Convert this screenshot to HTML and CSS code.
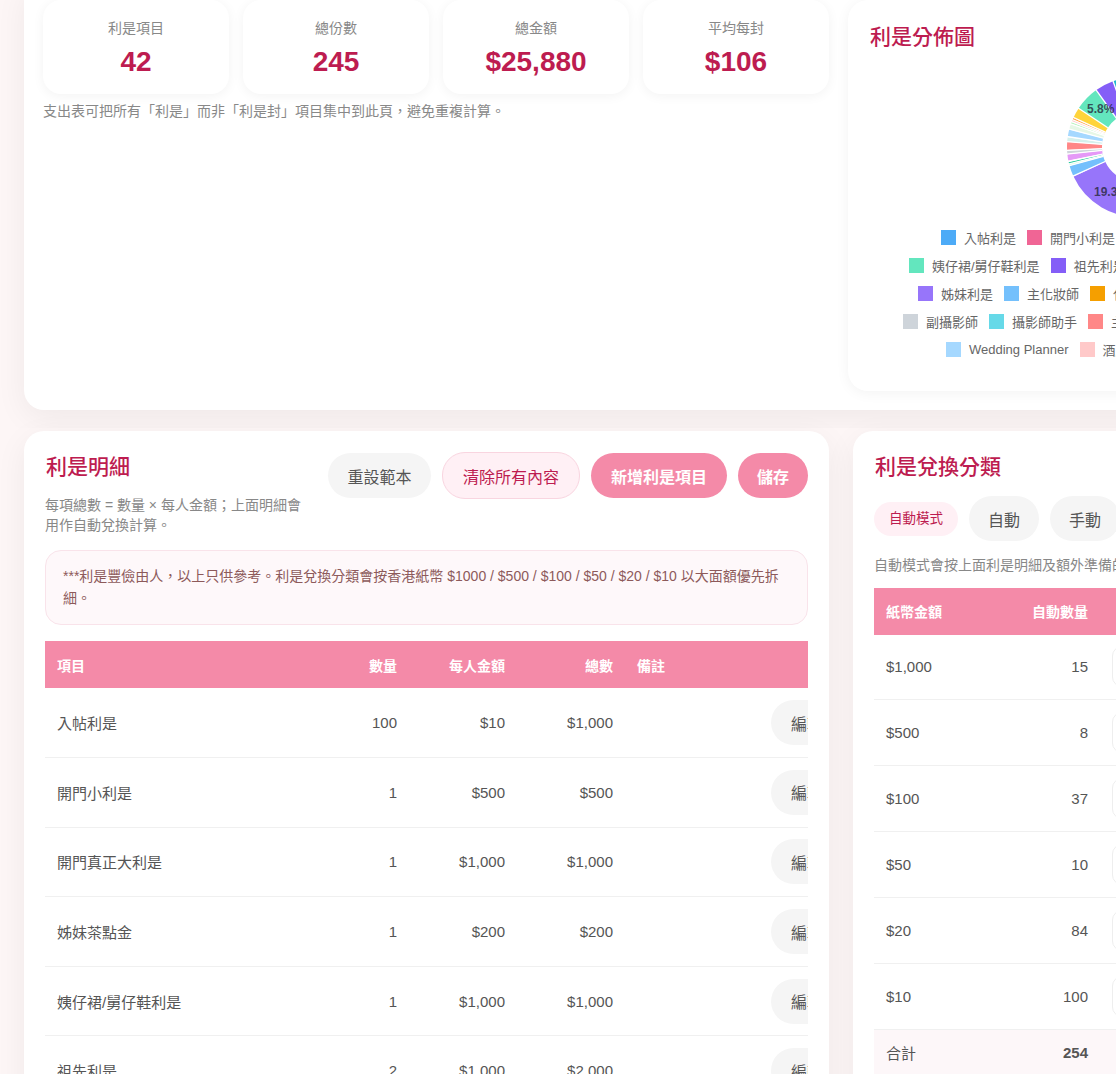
FILE: index.html
```html
<!DOCTYPE html>
<html lang="zh-Hant">
<head>
<meta charset="utf-8">
<title>利是</title>
<link rel="stylesheet" href="styles.css">
</head>
<body>
<div class="page">
  <section class="upper">
    <div class="panel top-panel">
      <div class="summary">
        <div class="stats">
          <div class="stat"><div class="stat-label">利是項目</div><div class="stat-value">42</div></div>
          <div class="stat"><div class="stat-label">總份數</div><div class="stat-value">245</div></div>
          <div class="stat"><div class="stat-label">總金額</div><div class="stat-value">$25,880</div></div>
          <div class="stat"><div class="stat-label">平均每封</div><div class="stat-value">$106</div></div>
        </div>
        <p class="summary-note">支出表可把所有「利是」而非「利是封」項目集中到此頁，避免重複計算。</p>
      </div>
      <div class="chart-card">
        <h2 class="title">利是分佈圖</h2>
        <svg class="donut" viewBox="0 0 150 150" width="150" height="150">
          <g fill="none" stroke-width="35">
            <circle cx="75" cy="75" r="52.5" pathLength="360" stroke="#4dabf7" stroke-dasharray="60 360" transform="rotate(-90 75 75)"/>
            <circle cx="75" cy="75" r="52.5" pathLength="360" stroke="#f06595" stroke-dasharray="60 360" transform="rotate(-30 75 75)"/>
            <circle cx="75" cy="75" r="52.5" pathLength="360" stroke="#ffa94d" stroke-dasharray="55.5 360" transform="rotate(30 75 75)"/>
            <circle cx="75" cy="75" r="52.5" pathLength="360" stroke="#9775fa" stroke-dasharray="69.5 360" transform="rotate(85.5 75 75)"/>
            <circle cx="75" cy="75" r="52.5" pathLength="360" stroke="#74c0fc" stroke-dasharray="9 360" transform="rotate(155.5 75 75)"/>
            <circle cx="75" cy="75" r="52.5" pathLength="360" stroke="#d3f9d8" stroke-dasharray="1.5 360" transform="rotate(164.5 75 75)"/>
            <circle cx="75" cy="75" r="52.5" pathLength="360" stroke="#20c997" stroke-dasharray="1.5 360" transform="rotate(166 75 75)"/>
            <circle cx="75" cy="75" r="52.5" pathLength="360" stroke="#e599f7" stroke-dasharray="5.5 360" transform="rotate(168.7 75 75)"/>
            <circle cx="75" cy="75" r="52.5" pathLength="360" stroke="#ced4da" stroke-dasharray="2.6 360" transform="rotate(174.3 75 75)"/>
            <circle cx="75" cy="75" r="52.5" pathLength="360" stroke="#ff8787" stroke-dasharray="6.8 360" transform="rotate(177.5 75 75)"/>
            <circle cx="75" cy="75" r="52.5" pathLength="360" stroke="#d5f0ec" stroke-dasharray="3.5 360" transform="rotate(184.5 75 75)"/>
            <circle cx="75" cy="75" r="52.5" pathLength="360" stroke="#a5d8ff" stroke-dasharray="6.1 360" transform="rotate(188.5 75 75)"/>
            <circle cx="75" cy="75" r="52.5" pathLength="360" stroke="#e6f7e6" stroke-dasharray="4 360" transform="rotate(195 75 75)"/>
            <circle cx="75" cy="75" r="52.5" pathLength="360" stroke="#b2f2bb" stroke-dasharray="1.6 360" transform="rotate(199.4 75 75)"/>
            <circle cx="75" cy="75" r="52.5" pathLength="360" stroke="#ffc9c9" stroke-dasharray="1.4 360" transform="rotate(201.3 75 75)"/>
            <circle cx="75" cy="75" r="52.5" pathLength="360" stroke="#ffa94d" stroke-dasharray="1.6 360" transform="rotate(203 75 75)"/>
            <circle cx="75" cy="75" r="52.5" pathLength="360" stroke="#ffd43b" stroke-dasharray="8.5 360" transform="rotate(205 75 75)"/>
            <circle cx="75" cy="75" r="52.5" pathLength="360" stroke="#63e6be" stroke-dasharray="20.9 360" transform="rotate(213.5 75 75)"/>
            <circle cx="75" cy="75" r="52.5" pathLength="360" stroke="#845ef7" stroke-dasharray="15.6 360" transform="rotate(234.4 75 75)"/>
            <circle cx="75" cy="75" r="52.5" pathLength="360" stroke="#22b8cf" stroke-dasharray="20 360" transform="rotate(250 75 75)"/>
          </g>
          <g class="donut-gaps" stroke="#fff" stroke-width="1.3">
            <line x1="75" y1="4" x2="75" y2="40" transform="rotate(175.5 75 75)"/>
            <line x1="75" y1="4" x2="75" y2="40" transform="rotate(245.5 75 75)"/>
            <line x1="75" y1="4" x2="75" y2="40" transform="rotate(254.5 75 75)"/>
            <line x1="75" y1="4" x2="75" y2="40" transform="rotate(256 75 75)"/>
            <line x1="75" y1="4" x2="75" y2="40" transform="rotate(258.4 75 75)"/>
            <line x1="75" y1="4" x2="75" y2="40" transform="rotate(264.3 75 75)"/>
            <line x1="75" y1="4" x2="75" y2="40" transform="rotate(267.3 75 75)"/>
            <line x1="75" y1="4" x2="75" y2="40" transform="rotate(274.4 75 75)"/>
            <line x1="75" y1="4" x2="75" y2="40" transform="rotate(278.5 75 75)"/>
            <line x1="75" y1="4" x2="75" y2="40" transform="rotate(284.7 75 75)"/>
            <line x1="75" y1="4" x2="75" y2="40" transform="rotate(289.3 75 75)"/>
            <line x1="75" y1="4" x2="75" y2="40" transform="rotate(291.2 75 75)"/>
            <line x1="75" y1="4" x2="75" y2="40" transform="rotate(293 75 75)"/>
            <line x1="75" y1="4" x2="75" y2="40" transform="rotate(295 75 75)"/>
            <line x1="75" y1="4" x2="75" y2="40" transform="rotate(303.5 75 75)"/>
            <line x1="75" y1="4" x2="75" y2="40" transform="rotate(324.4 75 75)"/>
            <line x1="75" y1="4" x2="75" y2="40" transform="rotate(340 75 75)"/>
          </g>
          <text class="slice-label" x="25" y="41">5.8%</text>
          <text class="slice-label" x="32" y="124">19.3%</text>
        </svg>
        <div class="legend">
          <div class="legend-row row-a">
            <span class="legend-item"><i class="sw c-blue"></i>入帖利是</span>
            <span class="legend-item"><i class="sw c-pink"></i>開門小利是</span>
            <span class="legend-item"><i class="sw c-gold"></i>開門真正大利是</span>
          </div>
          <div class="legend-row row-b">
            <span class="legend-item"><i class="sw c-mint"></i>姨仔裙/舅仔鞋利是</span>
            <span class="legend-item"><i class="sw c-violet"></i>祖先利是</span>
            <span class="legend-item"><i class="sw c-teal"></i>兄弟利是</span>
          </div>
          <div class="legend-row row-c">
            <span class="legend-item"><i class="sw c-purple"></i>姊妹利是</span>
            <span class="legend-item"><i class="sw c-sky"></i>主化妝師</span>
            <span class="legend-item"><i class="sw c-orange"></i>化妝師助手</span>
          </div>
          <div class="legend-row row-d">
            <span class="legend-item"><i class="sw c-grey"></i>副攝影師</span>
            <span class="legend-item"><i class="sw c-cyan"></i>攝影師助手</span>
            <span class="legend-item"><i class="sw c-red"></i>主持人</span>
          </div>
          <div class="legend-row row-e">
            <span class="legend-item"><i class="sw c-pale"></i>Wedding Planner</span>
            <span class="legend-item"><i class="sw c-rose"></i>酒店員工</span>
          </div>
        </div>
      </div>
    </div>
  </section>

  <section class="lower">
    <div class="panel detail-panel">
      <div class="detail-head">
        <div class="detail-intro">
          <h2 class="title">利是明細</h2>
          <p class="hint">每項總數 = 數量 × 每人金額；上面明細會用作自動兌換計算。</p>
        </div>
        <div class="actions">
          <button class="btn">重設範本</button>
          <button class="btn btn-soft btn-wide">清除所有內容</button>
          <button class="btn btn-main btn-wide">新增利是項目</button>
          <button class="btn btn-main btn-save">儲存</button>
        </div>
      </div>
      <div class="notice">***利是豐儉由人，以上只供參考。利是兌換分類會按香港紙幣 $1000 / $500 / $100 / $50 / $20 / $10 以大面額優先拆細。</div>
      <div class="table-wrap">
        <table class="table detail-table">
          <thead>
            <tr><th class="col-item">項目</th><th class="num col-qty">數量</th><th class="num col-amt">每人金額</th><th class="num col-amt">總數</th><th class="col-note">備註</th><th class="col-act"></th></tr>
          </thead>
          <tbody>
            <tr><td>入帖利是</td><td class="num">100</td><td class="num">$10</td><td class="num">$1,000</td><td></td><td><button class="btn btn-wide">編輯</button></td></tr>
            <tr><td>開門小利是</td><td class="num">1</td><td class="num">$500</td><td class="num">$500</td><td></td><td><button class="btn btn-wide">編輯</button></td></tr>
            <tr><td>開門真正大利是</td><td class="num">1</td><td class="num">$1,000</td><td class="num">$1,000</td><td></td><td><button class="btn btn-wide">編輯</button></td></tr>
            <tr><td>姊妹茶點金</td><td class="num">1</td><td class="num">$200</td><td class="num">$200</td><td></td><td><button class="btn btn-wide">編輯</button></td></tr>
            <tr><td>姨仔裙/舅仔鞋利是</td><td class="num">1</td><td class="num">$1,000</td><td class="num">$1,000</td><td></td><td><button class="btn btn-wide">編輯</button></td></tr>
            <tr><td>祖先利是</td><td class="num">2</td><td class="num">$1,000</td><td class="num">$2,000</td><td></td><td><button class="btn btn-wide">編輯</button></td></tr>
          </tbody>
        </table>
      </div>
    </div>

    <div class="panel exchange-panel">
      <h2 class="title">利是兌換分類</h2>
      <div class="mode-row">
        <span class="mode-pill">自動模式</span>
        <button class="btn btn-mode">自動</button>
        <button class="btn btn-mode">手動</button>
      </div>
      <p class="hint mode-hint">自動模式會按上面利是明細及額外準備的利是封數量計算所需紙幣。</p>
      <table class="table exchange-table">
        <thead>
          <tr><th class="col-note-value">紙幣金額</th><th class="num col-auto">自動數量</th><th class="num col-input">額外準備</th></tr>
        </thead>
        <tbody>
          <tr><td>$1,000</td><td class="num">15</td><td><input class="qty" value="0"></td></tr>
          <tr><td>$500</td><td class="num">8</td><td><input class="qty" value="0"></td></tr>
          <tr><td>$100</td><td class="num">37</td><td><input class="qty" value="0"></td></tr>
          <tr><td>$50</td><td class="num">10</td><td><input class="qty" value="0"></td></tr>
          <tr><td>$20</td><td class="num">84</td><td><input class="qty" value="0"></td></tr>
          <tr><td>$10</td><td class="num">100</td><td><input class="qty" value="0"></td></tr>
          <tr class="total"><td>合計</td><td class="num strong">254</td><td></td></tr>
        </tbody>
      </table>
    </div>
  </section>
</div>
</body>
</html>
```
FILE: styles.css
```css
* { box-sizing: border-box; }
html, body { margin: 0; height: 1074px; overflow: hidden; }
body {
  background: #fdf6f6;
  color: #555;
  font-family: "Liberation Sans", "Noto Sans CJK TC", sans-serif;
}
.page { width: 1450px; margin-top: -19px; }

.panel {
  background: #fff;
  border-radius: 20px;
  box-shadow: 0 8px 32px rgba(0, 0, 0, 0.06);
}

.upper { padding: 0 5px 18px 24px; }
.top-panel {
  display: grid;
  grid-template-columns: 786px 578px;
  gap: 19px;
  padding: 19px;
}

.stats { display: grid; grid-template-columns: repeat(4, 186px); gap: 14px; }
.stat {
  height: 94px;
  padding-top: 18px;
  background: #fff;
  border-radius: 18px;
  box-shadow: 0 2px 12px rgba(0, 0, 0, 0.05);
  text-align: center;
}
.stat-label { font-size: 14px; line-height: 20px; color: #888; }
.stat-value { margin-top: 4px; font-size: 28px; line-height: 40px; font-weight: 700; color: #bd1c50; }
.summary-note { margin: 7px 0 0; font-size: 14px; line-height: 20px; color: #888; }

.chart-card {
  height: 391px;
  padding: 22px;
  background: #fff;
  border-radius: 20px;
  box-shadow: 0 2px 14px rgba(0, 0, 0, 0.05);
}
.title { margin: 0; font-size: 21px; line-height: 30px; font-weight: 500; color: #bd1c50; }
.donut { display: block; margin: 20px auto 1px; }
.slice-label { font-size: 12px; font-weight: 700; fill: rgba(40, 40, 60, 0.8); }

.legend-row { display: flex; gap: 11px; height: 28px; align-items: center; white-space: nowrap; }
.row-a { padding-left: 71px; }
.row-b { padding-left: 39px; }
.row-c { padding-left: 48px; }
.row-d { padding-left: 33px; }
.row-e { padding-left: 76px; }
.legend-item { display: flex; align-items: center; gap: 8px; font-size: 13px; color: #666; }
.sw { display: block; width: 15px; height: 15px; }
.c-blue { background: #4dabf7; }
.c-pink { background: #f06595; }
.c-gold { background: #fcc419; }
.c-mint { background: #63e6be; }
.c-violet { background: #845ef7; }
.c-teal { background: #22b8cf; }
.c-purple { background: #9775fa; }
.c-sky { background: #74c0fc; }
.c-orange { background: #f59f00; }
.c-grey { background: #ced4da; }
.c-cyan { background: #66d9e8; }
.c-red { background: #ff8787; }
.c-pale { background: #a5d8ff; }
.c-rose { background: #ffc9c9; }

.lower {
  display: grid;
  grid-template-columns: 805px 597px;
  gap: 24px;
  padding: 3px 0 0 24px;
  background: #fdf6f6;
}
.detail-panel { padding: 21px 21px 0; height: 700px; }
.exchange-panel { padding: 21px 21px 0; height: 700px; }

.detail-head { display: flex; justify-content: space-between; align-items: flex-start; }
.detail-intro { width: 262px; }
.detail-intro .title { margin-left: 1px; }
.exchange-panel .title { margin-left: 1px; }
.hint { margin: 0; font-size: 14px; line-height: 19.5px; color: #888; }
.detail-intro .hint { margin-top: 14px; }
.actions { display: flex; gap: 11px; align-items: center; }

.btn {
  height: 45px;
  padding: 0 19.5px;
  border: 0;
  border-radius: 23px;
  background: #f5f5f5;
  color: #555;
  font: inherit;
  font-size: 16px;
  white-space: nowrap;
}
.btn-wide { padding: 0 20px; }
.btn-mode, .btn-save { padding: 0 19px; }
.btn-soft { height: 47px; background: #fff0f5; border: 1px solid #f9d5e0; color: #bd1c50; }
.btn-main { background: #f48aa8; color: #fff; font-weight: 700; }

.notice {
  margin-top: 15px;
  padding: 14px 17px 15px;
  border: 1px solid #f9e3ea;
  border-radius: 16px;
  background: #fef8fa;
  color: #8d5a5a;
  font-size: 14px;
  line-height: 22px;
}

.table-wrap { margin-top: 16px; overflow: hidden; }
.table { border-collapse: collapse; table-layout: fixed; font-size: 15px; }
.table th {
  height: 47px;
  padding: 0 12px;
  background: #f48aa8;
  color: #fff;
  font-size: 14px;
  font-weight: 700;
  text-align: left;
}
.table td { padding: 0 12px; border-bottom: 1px solid #f0f0f0; }
.table .num { text-align: right; }
.detail-table { width: 864px; }
.detail-table td { height: 69.6px; }
.col-item { width: 294px; }
.col-qty { width: 70px; }
.col-amt { width: 108px; }
.col-note { width: 134px; }
.col-act { width: 150px; }

.mode-row { display: flex; align-items: center; gap: 11px; margin-top: 14px; }
.mode-pill {
  display: block;
  padding: 0 15px;
  height: 34px;
  border-radius: 17px;
  background: #fff0f5;
  color: #bd1c50;
  font-size: 13.5px;
  line-height: 34px;
}
.mode-hint { margin-top: 15px; white-space: nowrap; }
.exchange-table { width: 500px; margin-top: 12px; }
.col-note-value { width: 100px; }
.col-auto { width: 126px; }
.col-input { width: 274px; }
.exchange-table td { height: 66px; }
.exchange-table tbody tr:first-child td { height: 65px; }
.qty {
  display: block;
  width: 120px;
  height: 41px;
  padding: 0 10px;
  border: 1px solid #eee;
  border-radius: 10px;
  background: #fff;
  color: #555;
  font: inherit;
}
.exchange-table .total td { height: 45px; background: #fdf7f9; border-bottom: 0; }
.strong { font-weight: 700; }
```
